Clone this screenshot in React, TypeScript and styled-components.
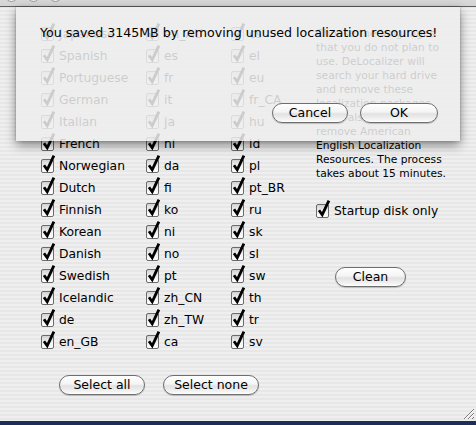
import { createGlobalStyle, styled } from 'styled-components';

const columns = [
  ['Japanese', 'Spanish', 'Portuguese', 'German', 'Italian', 'French', 'Norwegian', 'Dutch', 'Finnish', 'Korean', 'Danish', 'Swedish', 'Icelandic', 'de', 'en_GB'],
  ['en_AU', 'es', 'fr', 'it', 'ja', 'nl', 'da', 'fi', 'ko', 'ni', 'no', 'pt', 'zh_CN', 'zh_TW', 'ca'],
  ['cs', 'el', 'eu', 'fr_CA', 'hu', 'id', 'pl', 'pt_BR', 'ru', 'sk', 'sl', 'sw', 'th', 'tr', 'sv'],
];

const description = [
  'Choose the languages',
  'that you do not plan to',
  'use. DeLocalizer will',
  'search your hard drive',
  'and remove these',
  'localization packages.',
  'It will also',
  'remove American',
  'English Localization',
  'Resources. The process',
  'takes about 15 minutes.',
];

function CheckMark() {
  return (
    <CheckSvg width="16" height="19" viewBox="0 0 16 19">
      <defs>
        <linearGradient id="box" x1="0" y1="0" x2="0" y2="1">
          <stop offset="0" stopColor="#cfcfcf" />
          <stop offset="0.5" stopColor="#f2f2f2" />
          <stop offset="1" stopColor="#ffffff" />
        </linearGradient>
      </defs>
      <rect x="0.5" y="5.5" width="12" height="13" rx="1.5" fill="url(#box)" stroke="#6a6a6a" />
      <path d="M3 11.3 L6.2 15.8 L12.9 1.6" fill="none" stroke="#000" strokeWidth="2.8" strokeLinejoin="miter" />
    </CheckSvg>
  );
}

export default function App() {
  return (
    <>
      <GlobalStyle />
      <Window>
        <TitleBar>
          <Lights>
            <Light />
            <Light />
            <Light />
          </Lights>
          <Title>DeLocalizer</Title>
        </TitleBar>
        <Content>
          <LeftPane>
            <CheckGrid>
              {columns.map((col, ci) => (
                <Column key={ci} $width={ci === 0 ? 105 : 85}>
                  {col.map((name) => (
                    <CheckRow key={name}>
                      <CheckMark />
                      <Label>{name}</Label>
                    </CheckRow>
                  ))}
                </Column>
              ))}
            </CheckGrid>
            <ButtonRow>
              <PillButton $width={86}>Select all</PillButton>
              <PillButton $width={96}>Select none</PillButton>
            </ButtonRow>
          </LeftPane>
          <RightPane>
            <Description>
              {description.map((line) => (
                <div key={line}>{line}</div>
              ))}
            </Description>
            <CheckRow>
              <CheckMark />
              <Label>Startup disk only</Label>
            </CheckRow>
            <CleanWrap>
              <PillButton $width={71}>Clean</PillButton>
            </CleanWrap>
          </RightPane>
        </Content>
        <Sheet>
          <Message>You saved 3145MB by removing unused localization resources!</Message>
          <SheetButtons>
            <PillButton $width={76}>Cancel</PillButton>
            <PillButton $width={78}>OK</PillButton>
          </SheetButtons>
        </Sheet>
        <Grip width="14" height="14" viewBox="0 0 14 14">
          <path d="M13 3 L3 13 M13 7 L7 13 M13 11 L11 13" stroke="#7a7a7a" strokeWidth="1" />
          <path d="M13 4 L4 13 M13 8 L8 13" stroke="#ffffff" strokeWidth="1" />
        </Grip>
      </Window>
    </>
  );
}

const GlobalStyle = createGlobalStyle`
  body {
    margin: 0;
    background: #1c2d58;
    font-family: "DejaVu Sans", "Noto Sans", sans-serif;
  }
`;

const Window = styled.div`
  position: relative;
  width: 476px;
  height: 421px;
  overflow: hidden;
  background: repeating-linear-gradient(
    to bottom,
    #efefef 0px,
    #efefef 2px,
    #e7e7e7 2px,
    #e7e7e7 4px
  );
`;

const TitleBar = styled.div`
  height: 22px;
  margin-top: -16px;
  border-bottom: 1px solid #5f5f5f;
  background: linear-gradient(to bottom, #e2e2e2, #d4d4d4);
  display: flex;
  align-items: center;
  position: relative;
`;

const Lights = styled.div`
  display: flex;
  gap: 9px;
  padding-left: 5px;
`;

const Light = styled.span`
  width: 11px;
  height: 11px;
  border-radius: 50%;
  border: 1px solid #9a9a9a;
  background: linear-gradient(to bottom, #d0d0d0, #f4f4f4);
`;

const Title = styled.div`
  flex: 1;
  text-align: center;
  font-size: 12.3px;
  color: #222;
  margin-right: 70px;
`;

const Content = styled.div`
  display: flex;
  padding: 16px 0 0 41px;
`;

const LeftPane = styled.div`
  display: flex;
  flex-direction: column;
`;

const CheckGrid = styled.div`
  display: flex;
`;

const Column = styled.div<{ $width: number }>`
  width: ${({ $width }) => $width}px;
  display: flex;
  flex-direction: column;
`;

const CheckRow = styled.div`
  height: 22px;
  display: flex;
  align-items: center;
  gap: 5px;
`;

const CheckSvg = styled.svg`
  flex: none;
  margin-top: -5px;
  margin-right: -3px;
  overflow: visible;
`;

const Label = styled.span`
  font-size: 12.3px;
  color: #000;
  white-space: nowrap;
`;

const ButtonRow = styled.div`
  display: flex;
  gap: 18px;
  padding: 22px 0 0 18px;
`;

const PillButton = styled.button<{ $width: number }>`
  width: ${({ $width }) => $width}px;
  height: 20px;
  padding: 0;
  border: 1px solid #6e6e6e;
  border-radius: 10px;
  background: linear-gradient(
    to bottom,
    #ffffff 0%,
    #f4f4f4 45%,
    #e2e2e2 55%,
    #f2f2f2 85%,
    #ffffff 100%
  );
  box-shadow: 0 1px 1px rgba(0, 0, 0, 0.2);
  font-family: "DejaVu Sans", "Noto Sans", sans-serif;
  font-size: 12.5px;
  color: #000;
  line-height: 18px;
`;

const RightPane = styled.div`
  display: flex;
  flex-direction: column;
  padding: 4px 0 0 0;
`;

const Description = styled.div`
  font-size: 10.7px;
  line-height: 14px;
  color: #000;
  white-space: nowrap;
  margin-bottom: 19px;
`;

const CleanWrap = styled.div`
  padding: 44px 0 0 19px;
`;

const Sheet = styled.div`
  position: absolute;
  top: 7px;
  left: 16px;
  width: 444px;
  height: 134px;
  box-sizing: border-box;
  padding: 18px 22px 18px 24px;
  display: flex;
  flex-direction: column;
  justify-content: space-between;
  background: rgba(238, 238, 238, 0.86);
  box-shadow: 0 4px 10px rgba(0, 0, 0, 0.45), 0 0 2px rgba(0, 0, 0, 0.3);
`;

const Message = styled.div`
  font-size: 12.6px;
  line-height: 16px;
  color: #000;
  white-space: nowrap;
`;

const SheetButtons = styled.div`
  display: flex;
  justify-content: flex-end;
  gap: 12px;
`;

const Grip = styled.svg`
  position: absolute;
  right: 1px;
  bottom: 1px;
`;
